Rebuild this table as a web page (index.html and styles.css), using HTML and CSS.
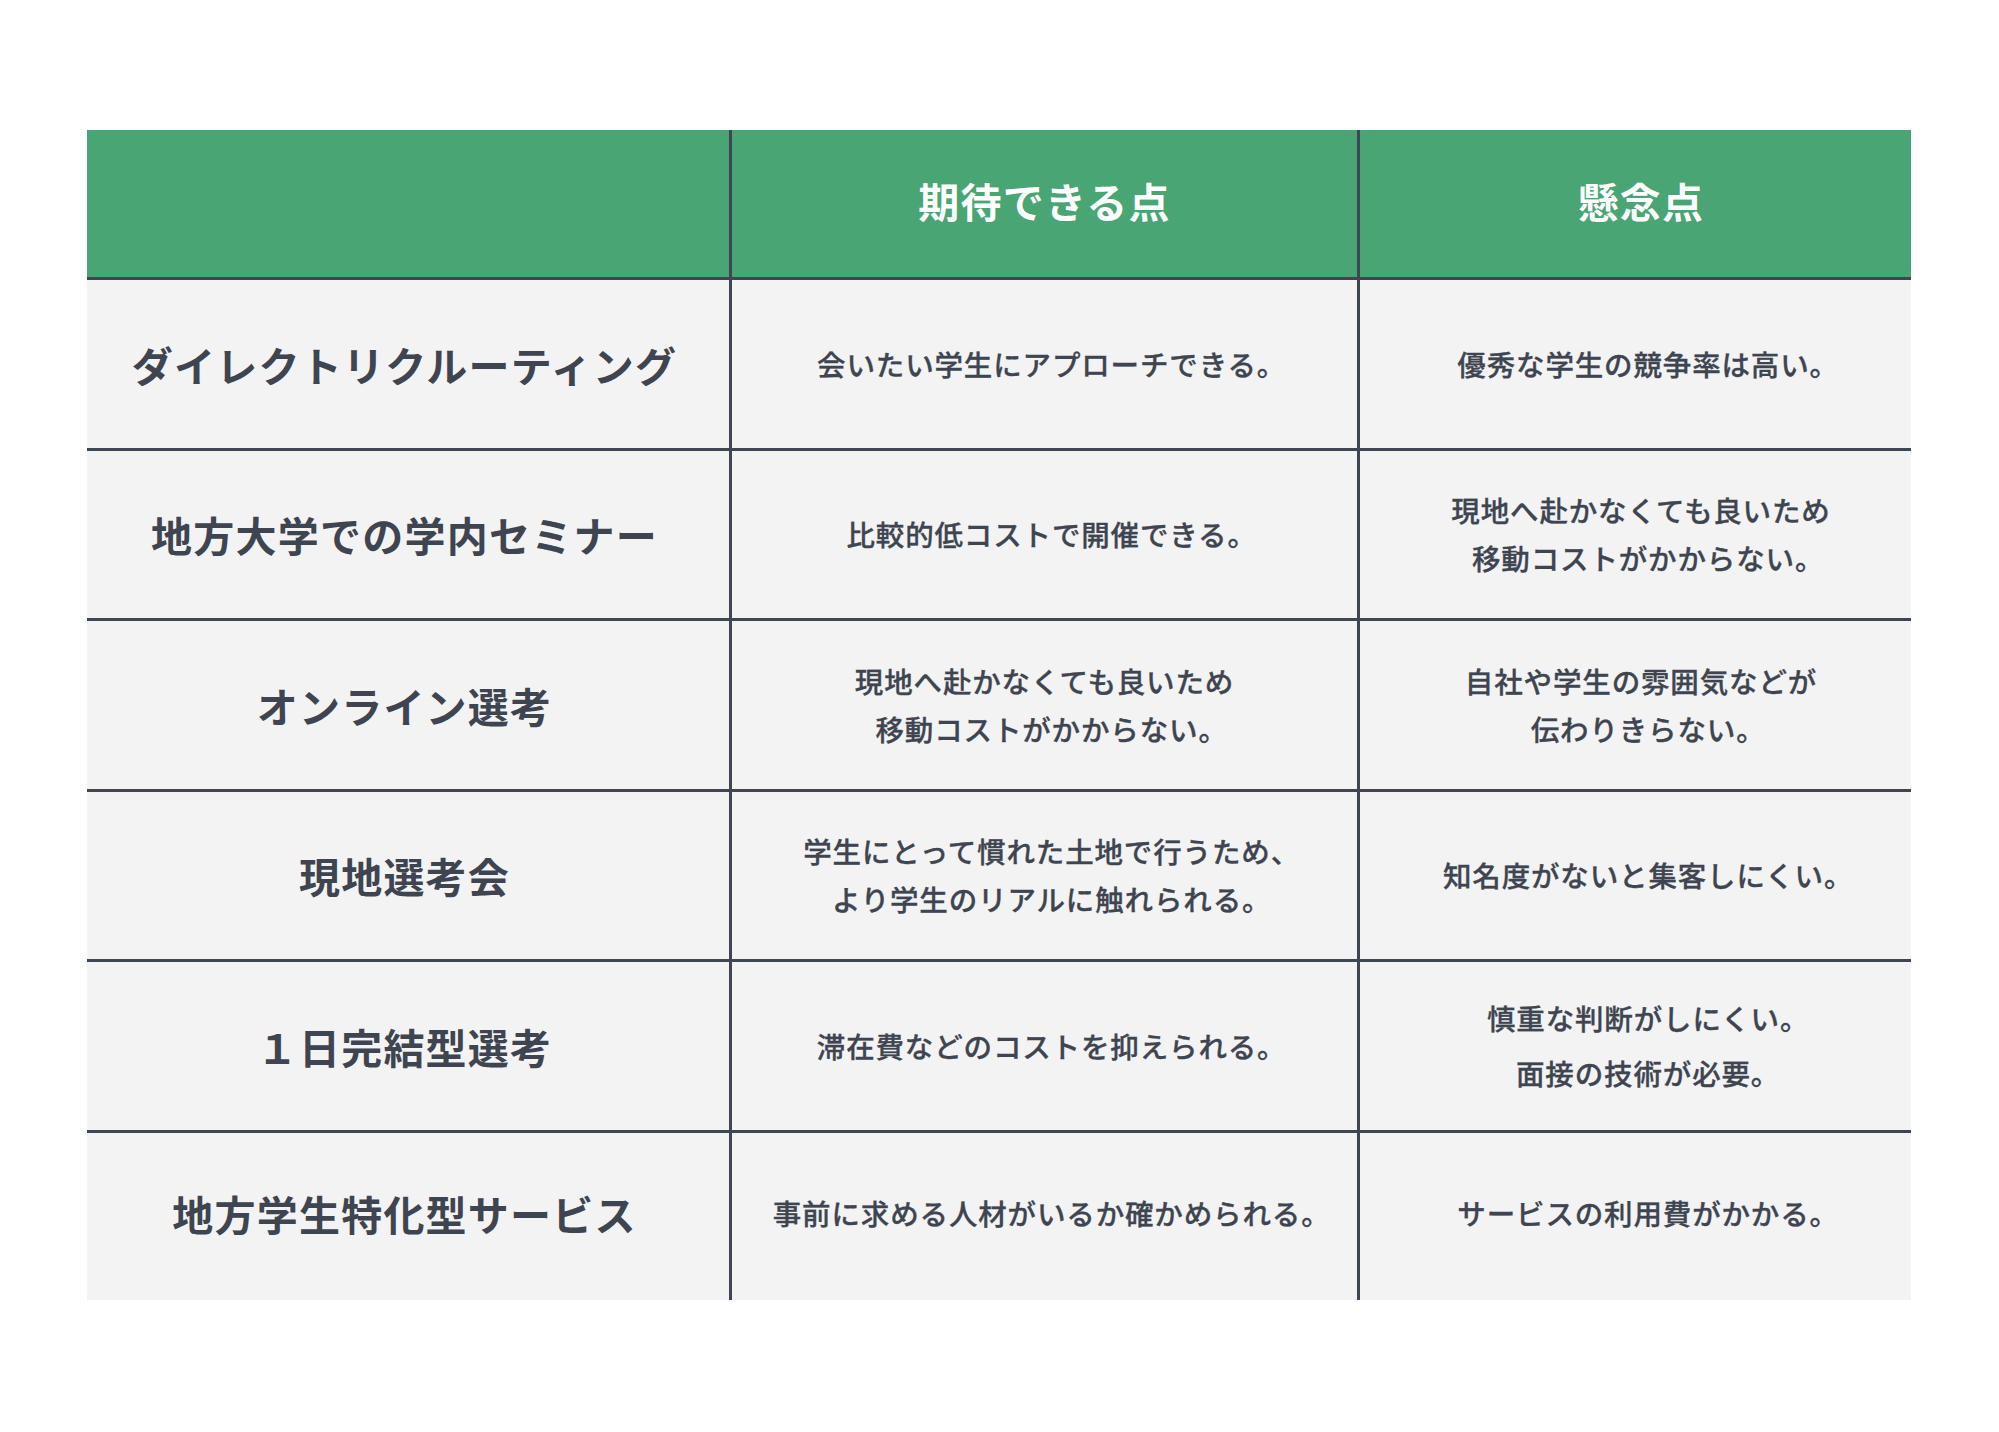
FILE: index.html
```html
<!DOCTYPE html>
<html lang="ja">
<head>
<meta charset="utf-8">
<title>採用手法の比較</title>
<link rel="stylesheet" href="styles.css">
</head>
<body>
<div class="page">
  <div class="table">
    <div class="cell head"></div>
    <div class="cell head">期待できる点</div>
    <div class="cell head right">懸念点</div>

    <div class="cell label">ダイレクトリクルーティング</div>
    <div class="cell body"><p>会いたい学生にアプローチできる。</p></div>
    <div class="cell body right"><p>優秀な学生の競争率は高い。</p></div>

    <div class="cell label">地方大学での学内セミナー</div>
    <div class="cell body"><p>比較的低コストで開催できる。</p></div>
    <div class="cell body right"><p>現地へ赴かなくても良いため<br>移動コストがかからない。</p></div>

    <div class="cell label">オンライン選考</div>
    <div class="cell body"><p>現地へ赴かなくても良いため<br>移動コストがかからない。</p></div>
    <div class="cell body right"><p>自社や学生の雰囲気などが<br>伝わりきらない。</p></div>

    <div class="cell label">現地選考会</div>
    <div class="cell body"><p>学生にとって慣れた土地で行うため、<br>より学生のリアルに触れられる。</p></div>
    <div class="cell body right"><p>知名度がないと集客しにくい。</p></div>

    <div class="cell label">１日完結型選考</div>
    <div class="cell body"><p>滞在費などのコストを抑えられる。</p></div>
    <div class="cell body right"><p class="para">慎重な判断がしにくい。</p><p class="para">面接の技術が必要。</p></div>

    <div class="cell label last">地方学生特化型サービス</div>
    <div class="cell body last"><p>事前に求める人材がいるか確かめられる。</p></div>
    <div class="cell body right last"><p>サービスの利用費がかかる。</p></div>
  </div>
</div>
</body>
</html>
```

FILE: styles.css
```css
html, body {
  margin: 0;
  padding: 0;
  background: #ffffff;
}

body {
  font-family: "Noto Sans CJK JP", "Noto Sans", sans-serif;
  color: #3e4550;
}

.page {
  padding: 130px 0 0 87px;
}

.table {
  display: grid;
  width: 1824px;
  grid-template-columns: 642px 625px 551px;
  grid-template-rows: 147px repeat(6, 167.5px);
  gap: 3px;
  background: #3f4651;
}

.cell {
  display: flex;
  align-items: center;
  justify-content: center;
  text-align: center;
  background: #f3f3f3;
  letter-spacing: 0.03em;
}

.head {
  background: #49a574;
  color: #ffffff;
  font-size: 41px;
  font-weight: 700;
  padding-bottom: 8px;
}

.label {
  font-size: 41px;
  font-weight: 700;
  padding-right: 7px;
}

.body {
  flex-direction: column;
  font-size: 28.5px;
  font-weight: 500;
  line-height: 48px;
  font-feature-settings: "halt" 1;
  -webkit-text-stroke: 0.3px #3e4550;
}

.body p {
  margin: 0;
}

.body .para + .para {
  margin-top: 7px;
}

.right {
  padding-left: 11px;
}

.last {
  padding-bottom: 7px;
}
```
